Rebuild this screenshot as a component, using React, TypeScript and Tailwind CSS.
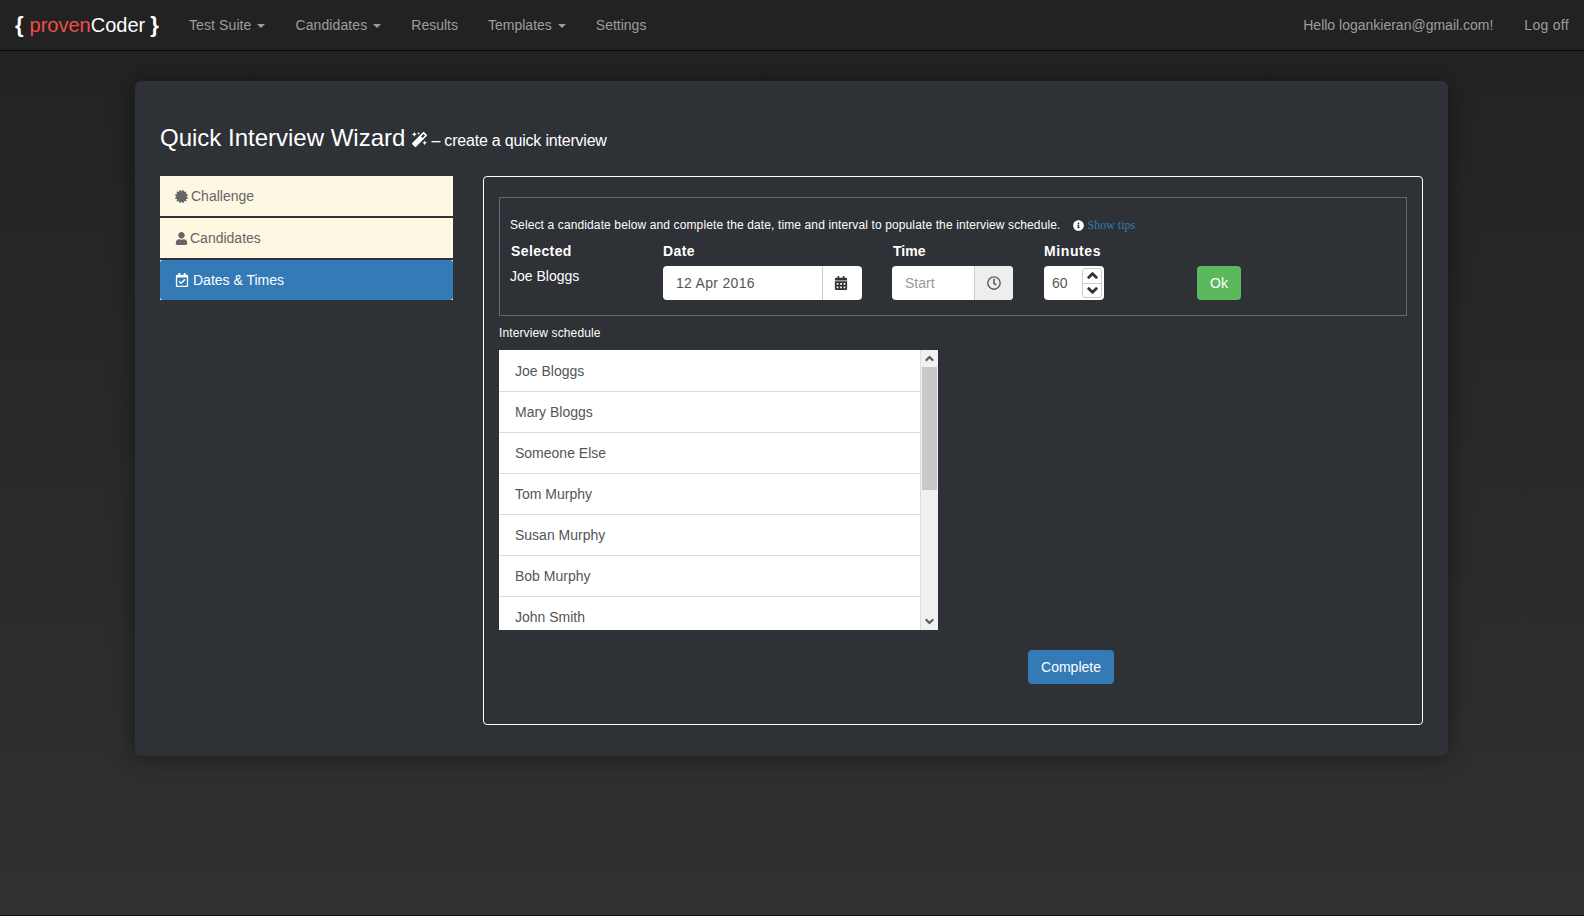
import { FaCertificate, FaUser, FaRegCalendarCheck, FaMagic, FaCalendarAlt, FaRegClock, FaInfoCircle, FaChevronUp, FaChevronDown } from "react-icons/fa";

const schedule = ["Joe Bloggs", "Mary Bloggs", "Someone Else", "Tom Murphy", "Susan Murphy", "Bob Murphy", "John Smith"];

function NavLink({ label, caret, className }: { label: string; caret?: boolean; className?: string }) {
  return (
    <a className={`flex items-center h-[50px] px-[15px] text-[14px] text-[#9d9d9d] ${className ?? ""}`}>
      {label}
      {caret && <span className="ml-[6px] mt-[1px] w-0 h-0 border-x-[4px] border-x-transparent border-t-[4px] border-t-[#9d9d9d]" />}
    </a>
  );
}

export default function App() {
  return (
    <div className="h-[916px] overflow-hidden bg-gradient-to-b from-[#222222] to-[#313131] border-b border-b-[#111] font-['Liberation_Sans',Arial,sans-serif]">
      <nav className="h-[51px] flex items-center justify-between bg-[#222222] border-b border-b-[#080808]">
        <div className="flex items-center">
          <div className="w-[174px] pl-[15px] flex items-center text-[20px] text-white whitespace-nowrap">
            <span className="font-bold text-[22px] leading-[24px]">{"{"}</span>
            <span className="ml-[6px] text-[#ef4d4a]">proven</span>Coder
            <span className="ml-[5px] font-bold text-[22px] leading-[24px]">{"}"}</span>
          </div>
          <NavLink label="Test Suite" caret className="tracking-[0.1px]" />
          <NavLink label="Candidates" caret className="tracking-[0.1px]" />
          <NavLink label="Results" />
          <NavLink label="Templates" caret />
          <NavLink label="Settings" />
        </div>
        <div className="flex items-center">
          <NavLink label="Hello logankieran@gmail.com!" className="pr-[16px]" />
          <NavLink label="Log off" className="tracking-[0.3px]" />
        </div>
      </nav>

      <main className="mt-[30px] ml-[135px] w-[1313px] h-[675px] rounded-[6px] bg-[#2e3136] px-[25px] shadow-[0_0_24px_rgba(0,0,0,0.45)]">
        <h1 className="h-[95px] pt-[43px] flex items-baseline text-white">
          <span className="text-[24px] leading-[28px]">Quick Interview Wizard</span>
          <FaMagic className="ml-[7px] mr-[4px] text-[15px] self-start mt-[8px]" />
          <span className="text-[16px] tracking-[-0.2px]">– create a quick interview</span>
        </h1>

        <div className="flex gap-[30px]">
          <aside className="w-[293px] flex flex-col gap-[2px] text-[14px]">
            <div className="h-[40px] flex items-center pl-[15px] bg-[#fef7e1] text-[#666666]">
              <FaCertificate className="text-[13px] mr-[3px]" /> Challenge
            </div>
            <div className="h-[40px] flex items-center pl-[15px] bg-[#fef7e1] text-[#666666]">
              <FaUser className="text-[13px] mr-[2px]" /> Candidates
            </div>
            <div className="h-[40px] bg-white">
              <div className="h-full flex items-center pl-[15px] rounded-[3px] bg-[#337ab7] text-white">
                <FaRegCalendarCheck className="text-[14px] mr-[4px]" /> Dates &amp; Times
              </div>
            </div>
          </aside>

          <section className="w-[940px] h-[549px] px-[15px] pt-[20px] border border-white rounded-[4px]">
            <div className="h-[119px] border border-[#66686b] pl-[10px] pt-[20px] text-white">
              <div className="flex items-center h-[14px] text-[12px] leading-[14px] tracking-[0.12px]">
                Select a candidate below and complete the date, time and interval to populate the interview schedule.
                <FaInfoCircle className="ml-[13px] mr-[3px] text-[11px]" />
                <a className="font-['Liberation_Serif',serif] tracking-normal text-[#337ab7]">Show tips</a>
              </div>
              <div className="flex mt-[9px]">
                <div className="w-[153px] text-[14px]">
                  <div className="font-bold leading-[20px] pl-[1px] tracking-[0.4px]">Selected</div>
                  <div className="mt-[5px] leading-[20px]">Joe Bloggs</div>
                </div>
                <div className="w-[229px]">
                  <div className="font-bold text-[14px] leading-[20px] mb-[5px] tracking-[0.4px]">Date</div>
                  <div className="w-[199px] h-[34px] flex bg-white rounded-[4px] text-[14px] text-[#555555]">
                    <div className="w-[160px] flex items-center pl-[13px] border-r border-r-[#cccccc] tracking-[0.3px]">12 Apr 2016</div>
                    <div className="flex-1 flex items-center justify-center pr-[3px] text-[#333333]">
                      <FaCalendarAlt className="text-[14px]" />
                    </div>
                  </div>
                </div>
                <div className="w-[152px]">
                  <div className="font-bold text-[14px] leading-[20px] mb-[5px] pl-[1px]">Time</div>
                  <div className="w-[121px] h-[34px] flex bg-white rounded-[4px] text-[14px] text-[#999999] overflow-hidden">
                    <div className="w-[83px] flex items-center pl-[13px] border-r border-r-[#cccccc]">Start</div>
                    <div className="flex-1 flex items-center justify-center bg-[#eeeeee] text-[#555555]">
                      <FaRegClock className="text-[14px]" />
                    </div>
                  </div>
                </div>
                <div className="w-[153px]">
                  <div className="font-bold text-[14px] leading-[20px] mb-[5px] tracking-[0.6px]">Minutes</div>
                  <div className="w-[60px] h-[34px] flex items-center justify-between pl-[8px] pr-[2px] bg-white rounded-[4px] text-[14px] text-[#555555]">
                    60
                    <div className="w-[20px] h-[30px] flex flex-col border border-[#cccccc] rounded-[3px] text-[#333333]">
                      <div className="flex-1 flex items-center justify-center border-b border-b-[#cccccc]"><FaChevronUp className="text-[11px] stroke-[50]" /></div>
                      <div className="flex-1 flex items-center justify-center"><FaChevronDown className="text-[11px] stroke-[50]" /></div>
                    </div>
                  </div>
                </div>
                <button className="mt-[25px] w-[44px] h-[34px] rounded-[4px] bg-[#5cb85c] text-white text-[14px]">Ok</button>
              </div>
            </div>

            <div className="mt-[9px] text-white text-[12px] leading-[17px] tracking-[0.12px]">Interview schedule</div>
            <div className="mt-[8px] w-[439px] h-[280px] flex bg-white overflow-hidden">
              <ul className="flex-1 pt-[1px] border-r border-r-[#dddddd] text-[14px] text-[#555555]">
                {schedule.map((name) => (
                  <li key={name} className="h-[41px] flex items-center pl-[16px] border-b border-b-[#dddddd]">{name}</li>
                ))}
              </ul>
              <div className="w-[17px] flex flex-col items-center bg-[#f1f1f1] text-[#505050]">
                <div className="h-[17px] flex items-center justify-center"><FaChevronUp className="text-[9px] stroke-[50]" /></div>
                <div className="w-[15px] h-[123px] bg-[#c9c9c9]" />
                <div className="mt-auto h-[17px] flex items-center justify-center"><FaChevronDown className="text-[9px] stroke-[50]" /></div>
              </div>
            </div>
            <button className="mt-[20px] ml-[529px] w-[86px] h-[34px] rounded-[4px] bg-[#337ab7] text-white text-[14px]">Complete</button>
          </section>
        </div>
      </main>
    </div>
  );
}
